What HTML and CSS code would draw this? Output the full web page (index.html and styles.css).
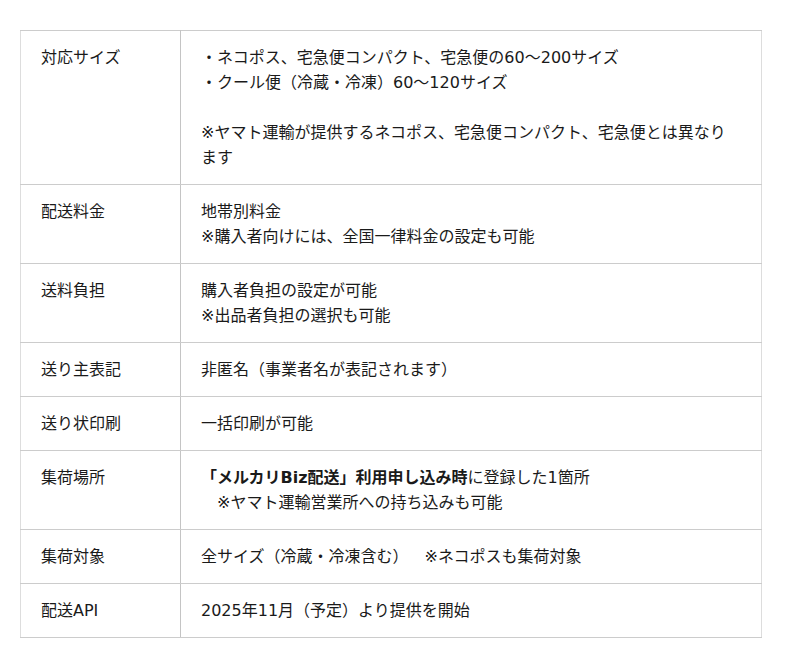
FILE: index.html
```html
<!DOCTYPE html>
<html lang="ja">
<head>
<meta charset="utf-8">
<link rel="stylesheet" href="styles.css">
</head>
<body>
<table class="spec">
  <tbody>
    <tr>
      <th>対応サイズ</th>
      <td>・ネコポス、宅急便コンパクト、宅急便の60～200サイズ<br>・クール便（冷蔵・冷凍）60～120サイズ<br><br>※ヤマト運輸が提供するネコポス、宅急便コンパクト、宅急便とは異なります</td>
    </tr>
    <tr>
      <th>配送料金</th>
      <td>地帯別料金<br>※購入者向けには、全国一律料金の設定も可能</td>
    </tr>
    <tr>
      <th>送料負担</th>
      <td>購入者負担の設定が可能<br>※出品者負担の選択も可能</td>
    </tr>
    <tr>
      <th>送り主表記</th>
      <td>非匿名（事業者名が表記されます）</td>
    </tr>
    <tr>
      <th>送り状印刷</th>
      <td>一括印刷が可能</td>
    </tr>
    <tr>
      <th>集荷場所</th>
      <td><strong>「メルカリBiz配送」利用申し込み時</strong>に登録した1箇所<br>　※ヤマト運輸営業所への持ち込みも可能</td>
    </tr>
    <tr>
      <th>集荷対象</th>
      <td>全サイズ（冷蔵・冷凍含む）<span class="note">※ネコポスも集荷対象</span></td>
    </tr>
    <tr>
      <th>配送API</th>
      <td>2025年11月（予定）より提供を開始</td>
    </tr>
  </tbody>
</table>
</body>
</html>
```

FILE: styles.css
```css
html, body {
  margin: 0;
  padding: 0;
  background: #ffffff;
}
body {
  font-family: "DejaVu Sans", "Noto Sans CJK JP", sans-serif;
  font-size: 16px;
  line-height: 25px;
  color: #1a1a1a;
}
.spec {
  margin: 30px 0 0 20px;
  width: 742px;
  border-collapse: collapse;
  border: 1px solid #dddddd;
  table-layout: fixed;
}
.spec th,
.spec td {
  border-top: 1px solid #cccccc;
  border-bottom: 1px solid #cccccc;
  padding: 14px 20px;
  text-align: left;
  vertical-align: top;
  font-weight: normal;
}
.spec th {
  width: 119px;
  border-right: 1px solid #c4c4c4;
}
.spec td strong {
  font-weight: bold;
}
.spec .note {
  margin-left: 16px;
}
```
